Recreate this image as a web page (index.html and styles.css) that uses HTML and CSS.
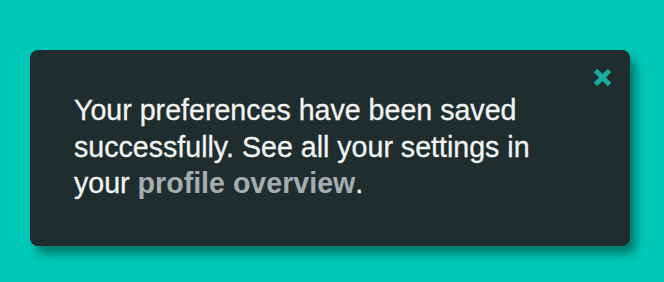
FILE: index.html
```html
<!DOCTYPE html>
<html>
<head>
<meta charset="utf-8">
<link rel="stylesheet" href="styles.css">
</head>
<body>
<div class="toast">
  <p class="message">Your preferences have been saved successfully. See all your settings in your <a class="link" href="#">profile overview</a>.</p>
  <button class="close" aria-label="Close">
    <svg width="21" height="21" viewBox="0 0 21 21"><path d="M3.5 3.5 L17.5 17.5 M17.5 3.5 L3.5 17.5" stroke="#17ad9e" stroke-width="4.8" stroke-linecap="butt"/></svg>
  </button>
</div>
</body>
</html>
```
FILE: styles.css
```css
html, body { margin: 0; padding: 0; }
body {
  background: #00c9b8;
  width: 664px;
  height: 282px;
  overflow: hidden;
  font-family: "Liberation Sans", Arial, sans-serif;
  padding: 50px 34px 0 30px;
  box-sizing: border-box;
}
.toast {
  position: relative;
  background: #1f2d2e;
  border-radius: 8px;
  height: 196px;
  box-sizing: border-box;
  padding: 42px 40px 0 44px;
  box-shadow: 6px 8px 10px rgba(0, 60, 55, 0.55);
}
.message {
  margin: 0;
  width: 500px;
  color: #f2f4f4;
  font-size: 28.6px;
  line-height: 36.5px;
  -webkit-text-stroke: 0.3px #f2f4f4;
}
.link {
  color: #a6adae;
  font-weight: bold;
  text-decoration: none;
  -webkit-text-stroke: 0;
}
.close {
  position: absolute;
  top: 17px;
  right: 17px;
  background: none;
  border: 0;
  padding: 0;
  width: 21px;
  height: 21px;
  cursor: pointer;
}
.close svg { display: block; }
```
